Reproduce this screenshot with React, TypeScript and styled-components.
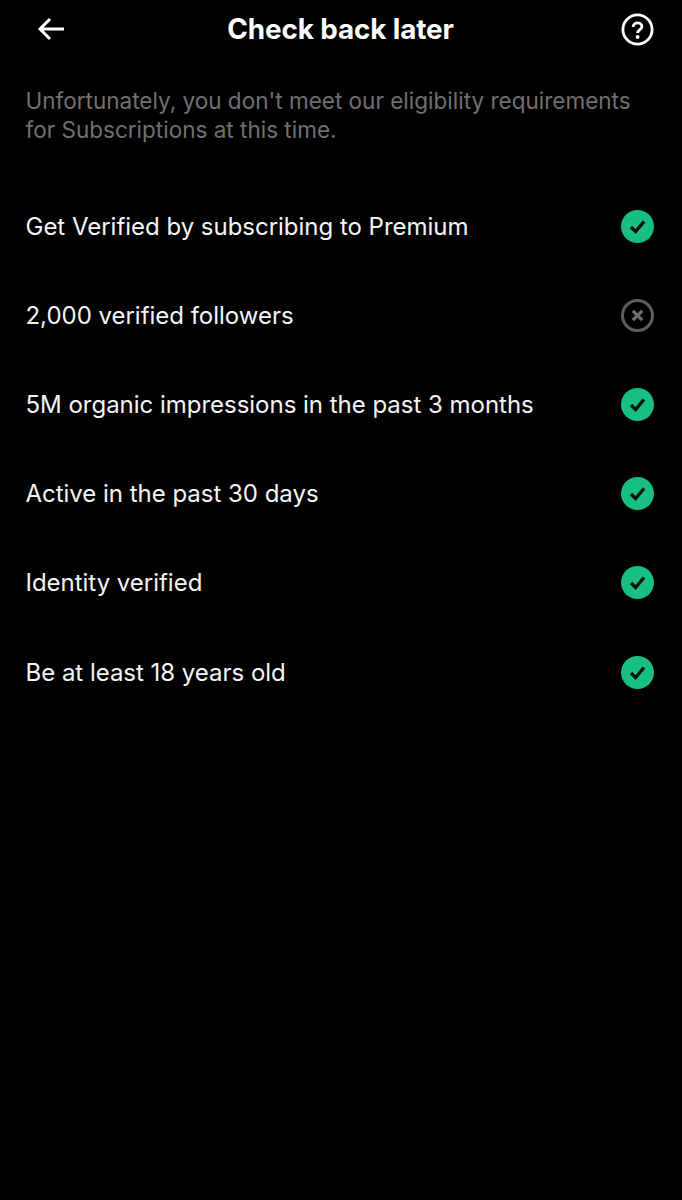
import React from 'react';
import styled, { createGlobalStyle } from 'styled-components';

const GlobalStyle = createGlobalStyle`
  html, body {
    margin: 0;
    padding: 0;
    background: #000;
  }
`;

const Page = styled.div`
  width: 682px;
  height: 1200px;
  overflow: hidden;
  background: #000;
  color: #fff;
  font-family: Inter, "Noto Sans", "Liberation Sans", sans-serif;
`;

const Header = styled.header`
  height: 58px;
  display: flex;
  align-items: center;
  justify-content: space-between;
  padding: 0 28px 0 37px;
`;

const Title = styled.h1`
  margin: 0 5px 0 0;
  font-size: 27.8px;
  font-weight: 700;
  letter-spacing: -0.1px;
`;

const IconWrap = styled.span`
  display: flex;
  width: 33px;
  height: 33px;
  flex: none;
`;

const Notice = styled.p`
  margin: 28px 40px 0 25.5px;
  font-size: 22.52px;
  line-height: 29px;
  font-weight: 400;
  color: #6f7072;
`;

const List = styled.ul`
  list-style: none;
  margin: 38px 0 0;
  padding: 0 28px 0 25.5px;
`;

const Row = styled.li`
  height: 89.1px;
  display: flex;
  align-items: center;
  justify-content: space-between;
`;

const Label = styled.span`
  font-size: 24px;
  font-weight: 400;
  letter-spacing: -0.02px;
  color: #f4f5f5;
`;

const BackArrow = () => (
  <svg width="28" height="24" viewBox="0 0 28 24" fill="none" stroke="#fff" strokeWidth="3">
    <path d="M27 12H3M13 2L3 12l10 10" />
  </svg>
);

const HelpIcon = () => (
  <svg width="33" height="33" viewBox="0 0 33 33" fill="none">
    <circle cx="16.5" cy="16.5" r="14.6" stroke="#fff" strokeWidth="2.8" />
    <path
      d="M12.2 14c0-2.5 1.9-4.1 4.3-4.1s4.4 1.5 4.4 3.7c0 3.2-4.3 3.3-4.3 6.3"
      stroke="#fff"
      strokeWidth="2.9"
    />
    <circle cx="16.6" cy="24" r="1.9" fill="#fff" />
  </svg>
);

const CheckIcon = () => (
  <IconWrap>
    <svg width="33" height="33" viewBox="0 0 33 33" fill="none">
      <circle cx="16.5" cy="16.5" r="16.5" fill="#17bf82" />
      <path d="M10 17l4.6 4.6L23 11.5" stroke="#06140f" strokeWidth="3.4" />
    </svg>
  </IconWrap>
);

const CrossIcon = () => (
  <IconWrap>
    <svg width="33" height="33" viewBox="0 0 33 33" fill="none">
      <circle cx="16.5" cy="16.5" r="15" stroke="#5c5e60" strokeWidth="3" />
      <path d="M11.8 11.8l9.4 9.4M21.2 11.8l-9.4 9.4" stroke="#6e7072" strokeWidth="3.2" />
    </svg>
  </IconWrap>
);

const requirements = [
  { label: 'Get Verified by subscribing to Premium', met: true },
  { label: '2,000 verified followers', met: false },
  { label: '5M organic impressions in the past 3 months', met: true },
  { label: 'Active in the past 30 days', met: true },
  { label: 'Identity verified', met: true },
  { label: 'Be at least 18 years old', met: true },
];

export default function App() {
  return (
    <Page>
      <GlobalStyle />
      <Header>
        <BackArrow />
        <Title>Check back later</Title>
        <IconWrap>
          <HelpIcon />
        </IconWrap>
      </Header>
      <Notice>
        Unfortunately, you don't meet our eligibility requirements for Subscriptions at this time.
      </Notice>
      <List>
        {requirements.map((item) => (
          <Row key={item.label}>
            <Label>{item.label}</Label>
            {item.met ? <CheckIcon /> : <CrossIcon />}
          </Row>
        ))}
      </List>
    </Page>
  );
}
